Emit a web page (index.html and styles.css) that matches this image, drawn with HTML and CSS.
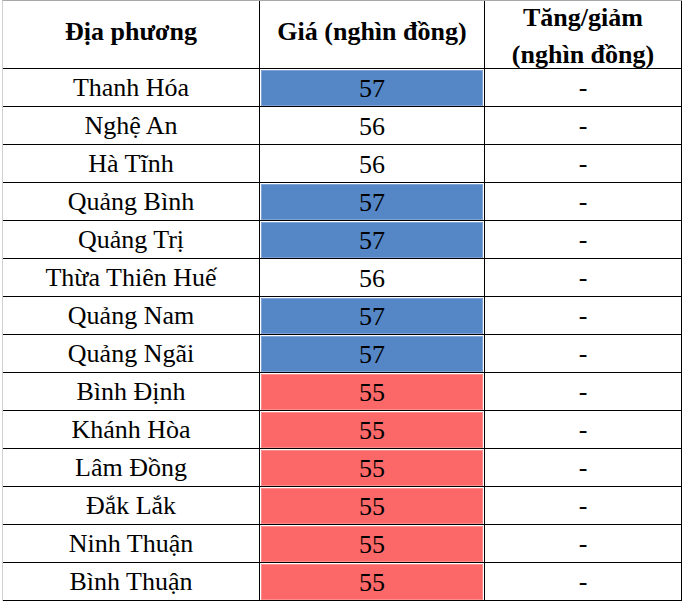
FILE: index.html
```html
<!DOCTYPE html>
<html>
<head>
<meta charset="utf-8">
<title>Giá heo hơi</title>
<link rel="stylesheet" href="styles.css">
</head>
<body>
<section class="board">
  <div class="bc bh"><span class="t">Địa phương</span></div>
  <div class="bc bh"><span class="t">Giá (nghìn đồng)</span></div>
  <div class="bc bh bh2"><span class="t">Tăng/giảm<br>(nghìn đồng)</span></div>

  <div class="bc"><span class="t">Thanh Hóa</span></div><div class="bc bp"><div class="bf blue"><span class="t">57</span></div></div><div class="bc"><span class="t">-</span></div>
  <div class="bc"><span class="t">Nghệ An</span></div><div class="bc bp"><div class="bf"><span class="t">56</span></div></div><div class="bc"><span class="t">-</span></div>
  <div class="bc"><span class="t">Hà Tĩnh</span></div><div class="bc bp"><div class="bf"><span class="t">56</span></div></div><div class="bc"><span class="t">-</span></div>
  <div class="bc"><span class="t">Quảng Bình</span></div><div class="bc bp"><div class="bf blue"><span class="t">57</span></div></div><div class="bc"><span class="t">-</span></div>
  <div class="bc"><span class="t">Quảng Trị</span></div><div class="bc bp"><div class="bf blue"><span class="t">57</span></div></div><div class="bc"><span class="t">-</span></div>
  <div class="bc"><span class="t">Thừa Thiên Huế</span></div><div class="bc bp"><div class="bf"><span class="t">56</span></div></div><div class="bc"><span class="t">-</span></div>
  <div class="bc"><span class="t">Quảng Nam</span></div><div class="bc bp"><div class="bf blue"><span class="t">57</span></div></div><div class="bc"><span class="t">-</span></div>
  <div class="bc"><span class="t">Quảng Ngãi</span></div><div class="bc bp"><div class="bf blue"><span class="t">57</span></div></div><div class="bc"><span class="t">-</span></div>
  <div class="bc"><span class="t">Bình Định</span></div><div class="bc bp"><div class="bf red"><span class="t">55</span></div></div><div class="bc"><span class="t">-</span></div>
  <div class="bc"><span class="t">Khánh Hòa</span></div><div class="bc bp"><div class="bf red"><span class="t">55</span></div></div><div class="bc"><span class="t">-</span></div>
  <div class="bc"><span class="t">Lâm Đồng</span></div><div class="bc bp"><div class="bf red"><span class="t">55</span></div></div><div class="bc"><span class="t">-</span></div>
  <div class="bc"><span class="t">Đắk Lắk</span></div><div class="bc bp"><div class="bf red"><span class="t">55</span></div></div><div class="bc"><span class="t">-</span></div>
  <div class="bc"><span class="t">Ninh Thuận</span></div><div class="bc bp"><div class="bf red"><span class="t">55</span></div></div><div class="bc"><span class="t">-</span></div>
  <div class="bc"><span class="t">Bình Thuận</span></div><div class="bc bp"><div class="bf red"><span class="t">55</span></div></div><div class="bc"><span class="t">-</span></div>
</section>
</body>
</html>
```

FILE: styles.css
```css
html, body {
  margin: 0;
  padding: 0;
  background: #ffffff;
}

.board {
  margin: 0 0 0 2px;
  width: 679px;
  display: grid;
  grid-template-columns: 257px 225px 197px;
  grid-template-rows: 68px repeat(14, 38px);
  border-top: 1px solid #a8a8a8;
  border-left: 1px solid #d0d0d0;
  color: #000;
}

.bc {
  border-right: 1px solid #000;
  border-bottom: 1px solid #000;
  text-align: center;
  white-space: nowrap;
  line-height: 37px;
}

.t {
  font-family: "Liberation Serif", serif;
  font-size: 26px;
}

.bh {
  font-weight: bold;
  line-height: 34px;
  padding-top: 14px;
  box-sizing: border-box;
}

.bh2 {
  padding-top: 0;
}

.bp {
  padding: 1px;
}

.bf {
  height: 34px;
  line-height: 35px;
  border: 1px solid transparent;
}

.blue {
  background: #5586c6;
  border-color: #7ea3d6;
}

.red {
  background: #fc6868;
  border-color: #fd8c8c;
}
```
